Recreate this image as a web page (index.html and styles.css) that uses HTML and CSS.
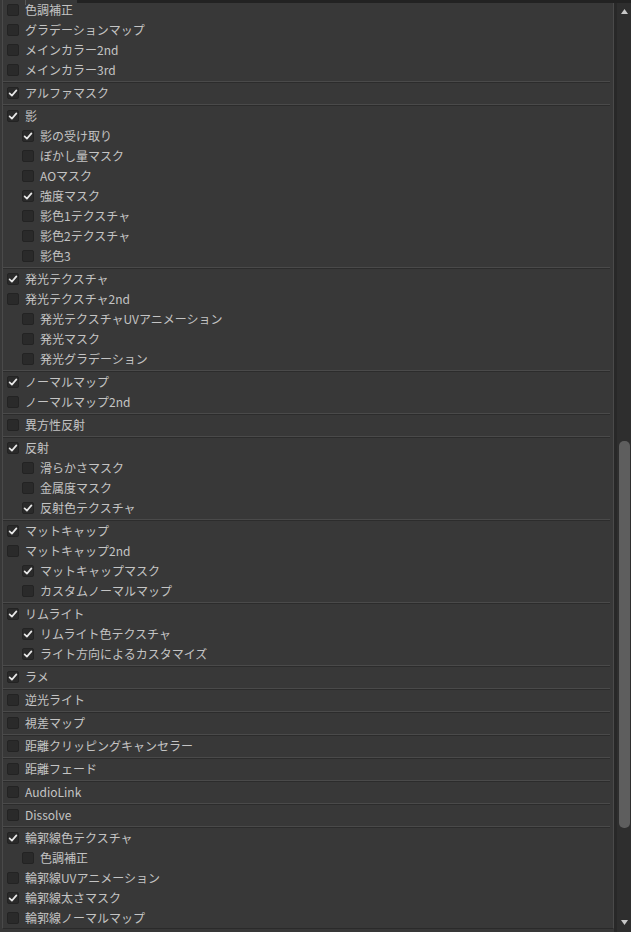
FILE: index.html
```html
<!DOCTYPE html>
<html lang="ja">
<head>
<meta charset="utf-8">
<title>lilToon</title>
<link rel="stylesheet" href="styles.css">
</head>
<body>
<div class="topbar"><div class="topleft"><span class="tick"></span></div><div class="topdark"></div></div>
<div class="window">
  <div class="panel">
    <div class="group">
      <div class="row"><span class="cb"></span><span class="label">色調補正</span></div>
      <div class="row"><span class="cb"></span><span class="label">グラデーションマップ</span></div>
      <div class="row"><span class="cb"></span><span class="label">メインカラー2nd</span></div>
      <div class="row"><span class="cb"></span><span class="label">メインカラー3rd</span></div>
    </div>
    <div class="sep"></div>
    <div class="group">
      <div class="row"><span class="cb on"><svg viewBox="0 0 12 12"><polyline points="2.6,6.4 4.9,8.6 9.4,3.4"/></svg></span><span class="label">アルファマスク</span></div>
    </div>
    <div class="sep"></div>
    <div class="group">
      <div class="row"><span class="cb on"><svg viewBox="0 0 12 12"><polyline points="2.6,6.4 4.9,8.6 9.4,3.4"/></svg></span><span class="label">影</span></div>
      <div class="row sub"><span class="cb on"><svg viewBox="0 0 12 12"><polyline points="2.6,6.4 4.9,8.6 9.4,3.4"/></svg></span><span class="label">影の受け取り</span></div>
      <div class="row sub"><span class="cb"></span><span class="label">ぼかし量マスク</span></div>
      <div class="row sub"><span class="cb"></span><span class="label">AOマスク</span></div>
      <div class="row sub"><span class="cb on"><svg viewBox="0 0 12 12"><polyline points="2.6,6.4 4.9,8.6 9.4,3.4"/></svg></span><span class="label">強度マスク</span></div>
      <div class="row sub"><span class="cb"></span><span class="label">影色1テクスチャ</span></div>
      <div class="row sub"><span class="cb"></span><span class="label">影色2テクスチャ</span></div>
      <div class="row sub"><span class="cb"></span><span class="label">影色3</span></div>
    </div>
    <div class="sep"></div>
    <div class="group">
      <div class="row"><span class="cb on"><svg viewBox="0 0 12 12"><polyline points="2.6,6.4 4.9,8.6 9.4,3.4"/></svg></span><span class="label">発光テクスチャ</span></div>
      <div class="row"><span class="cb"></span><span class="label">発光テクスチャ2nd</span></div>
      <div class="row sub"><span class="cb"></span><span class="label">発光テクスチャUVアニメーション</span></div>
      <div class="row sub"><span class="cb"></span><span class="label">発光マスク</span></div>
      <div class="row sub"><span class="cb"></span><span class="label">発光グラデーション</span></div>
    </div>
    <div class="sep"></div>
    <div class="group">
      <div class="row"><span class="cb on"><svg viewBox="0 0 12 12"><polyline points="2.6,6.4 4.9,8.6 9.4,3.4"/></svg></span><span class="label">ノーマルマップ</span></div>
      <div class="row"><span class="cb"></span><span class="label">ノーマルマップ2nd</span></div>
    </div>
    <div class="sep"></div>
    <div class="group">
      <div class="row"><span class="cb"></span><span class="label">異方性反射</span></div>
    </div>
    <div class="sep"></div>
    <div class="group">
      <div class="row"><span class="cb on"><svg viewBox="0 0 12 12"><polyline points="2.6,6.4 4.9,8.6 9.4,3.4"/></svg></span><span class="label">反射</span></div>
      <div class="row sub"><span class="cb"></span><span class="label">滑らかさマスク</span></div>
      <div class="row sub"><span class="cb"></span><span class="label">金属度マスク</span></div>
      <div class="row sub"><span class="cb on"><svg viewBox="0 0 12 12"><polyline points="2.6,6.4 4.9,8.6 9.4,3.4"/></svg></span><span class="label">反射色テクスチャ</span></div>
    </div>
    <div class="sep"></div>
    <div class="group">
      <div class="row"><span class="cb on"><svg viewBox="0 0 12 12"><polyline points="2.6,6.4 4.9,8.6 9.4,3.4"/></svg></span><span class="label">マットキャップ</span></div>
      <div class="row"><span class="cb"></span><span class="label">マットキャップ2nd</span></div>
      <div class="row sub"><span class="cb on"><svg viewBox="0 0 12 12"><polyline points="2.6,6.4 4.9,8.6 9.4,3.4"/></svg></span><span class="label">マットキャップマスク</span></div>
      <div class="row sub"><span class="cb"></span><span class="label">カスタムノーマルマップ</span></div>
    </div>
    <div class="sep"></div>
    <div class="group">
      <div class="row"><span class="cb on"><svg viewBox="0 0 12 12"><polyline points="2.6,6.4 4.9,8.6 9.4,3.4"/></svg></span><span class="label">リムライト</span></div>
      <div class="row sub"><span class="cb on"><svg viewBox="0 0 12 12"><polyline points="2.6,6.4 4.9,8.6 9.4,3.4"/></svg></span><span class="label">リムライト色テクスチャ</span></div>
      <div class="row sub"><span class="cb on"><svg viewBox="0 0 12 12"><polyline points="2.6,6.4 4.9,8.6 9.4,3.4"/></svg></span><span class="label">ライト方向によるカスタマイズ</span></div>
    </div>
    <div class="sep"></div>
    <div class="group">
      <div class="row"><span class="cb on"><svg viewBox="0 0 12 12"><polyline points="2.6,6.4 4.9,8.6 9.4,3.4"/></svg></span><span class="label">ラメ</span></div>
    </div>
    <div class="sep"></div>
    <div class="group">
      <div class="row"><span class="cb"></span><span class="label">逆光ライト</span></div>
    </div>
    <div class="sep"></div>
    <div class="group">
      <div class="row"><span class="cb"></span><span class="label">視差マップ</span></div>
    </div>
    <div class="sep"></div>
    <div class="group">
      <div class="row"><span class="cb"></span><span class="label">距離クリッピングキャンセラー</span></div>
    </div>
    <div class="sep"></div>
    <div class="group">
      <div class="row"><span class="cb"></span><span class="label">距離フェード</span></div>
    </div>
    <div class="sep"></div>
    <div class="group">
      <div class="row"><span class="cb"></span><span class="label">AudioLink</span></div>
    </div>
    <div class="sep"></div>
    <div class="group">
      <div class="row"><span class="cb"></span><span class="label">Dissolve</span></div>
    </div>
    <div class="sep"></div>
    <div class="group">
      <div class="row"><span class="cb on"><svg viewBox="0 0 12 12"><polyline points="2.6,6.4 4.9,8.6 9.4,3.4"/></svg></span><span class="label">輪郭線色テクスチャ</span></div>
      <div class="row sub"><span class="cb"></span><span class="label">色調補正</span></div>
      <div class="row"><span class="cb"></span><span class="label">輪郭線UVアニメーション</span></div>
      <div class="row"><span class="cb on"><svg viewBox="0 0 12 12"><polyline points="2.6,6.4 4.9,8.6 9.4,3.4"/></svg></span><span class="label">輪郭線太さマスク</span></div>
      <div class="row"><span class="cb"></span><span class="label">輪郭線ノーマルマップ</span></div>
    </div>
  </div>
  <div class="gutter"></div>
  <div class="scrollbar">
    <svg class="arrow" viewBox="0 0 7 5"><polygon points="3.5,0 7,5 0,5"/></svg>
    <div class="thumb"></div>
    <div class="spacer"></div>
    <svg class="arrow" viewBox="0 0 7 5"><polygon points="0,0 7,0 3.5,5"/></svg>
  </div>
</div>
</body>
</html>
```

FILE: styles.css
```css
html, body {
  margin: 0;
  padding: 0;
}
body {
  background: #383838;
  color: #c4c4c4;
  font-family: "Noto Sans CJK JP", "Noto Sans", sans-serif;
  font-size: 12px;
  width: 631px;
  height: 932px;
  overflow: hidden;
}
.topbar {
  height: 3px;
  display: flex;
  position: relative;
  z-index: 1;
}
.topleft {
  width: 77px;
}
.tick {
  display: block;
  margin-left: 25px;
  width: 1px;
  height: 5px;
  background: #5a5a5a;
}
.topdark {
  flex: 1;
  background: #222222;
}
.window {
  display: flex;
  margin-top: -3px;
  height: 932px;
}
.panel {
  width: 610px;
  margin-left: 2px;
  border-left: 1px solid #4a4a4a;
  border-right: 1px solid #4a4a4a;
  border-bottom: 1px solid #2a2a2a;
  align-self: flex-start;
}
.row {
  height: 20px;
  display: flex;
  align-items: center;
  padding-left: 4px;
  white-space: nowrap;
}
.row.sub {
  padding-left: 19px;
}
.cb {
  flex: none;
  width: 12px;
  height: 12px;
  box-sizing: border-box;
  border: 1px solid #232323;
  background: #2a2a2a;
  border-radius: 2px;
  margin-right: 6px;
  display: flex;
  align-items: center;
  justify-content: center;
}
.cb svg {
  width: 12px;
  height: 12px;
  flex: none;
}
.cb polyline {
  fill: none;
  stroke: #e8e8e8;
  stroke-width: 1.7;
  stroke-linecap: round;
  stroke-linejoin: round;
}
.label {
  line-height: 20px;
  color: #c4c4c4;
}
.sep {
  height: 3px;
  margin-right: 3px;
  background: linear-gradient(to bottom, transparent 0 1px, #4a4a4a 1px 2px, #2c2c2c 2px 3px);
}
.gutter {
  width: 3px;
  background: #282828;
}
.scrollbar {
  width: 14px;
  background: #2e2e2e;
  display: flex;
  flex-direction: column;
  align-items: center;
  padding-top: 9px;
  padding-bottom: 7px;
  box-sizing: border-box;
}
.arrow {
  width: 7px;
  height: 5px;
  flex: none;
  margin-left: 1px;
}
.arrow polygon {
  fill: #c8c8c8;
}
.thumb {
  width: 11px;
  height: 387px;
  margin-top: 427px;
  border-radius: 5px;
  background: #5e5e5e;
  flex: none;
  margin-left: 1px;
}
.spacer {
  flex: 1;
}
```
